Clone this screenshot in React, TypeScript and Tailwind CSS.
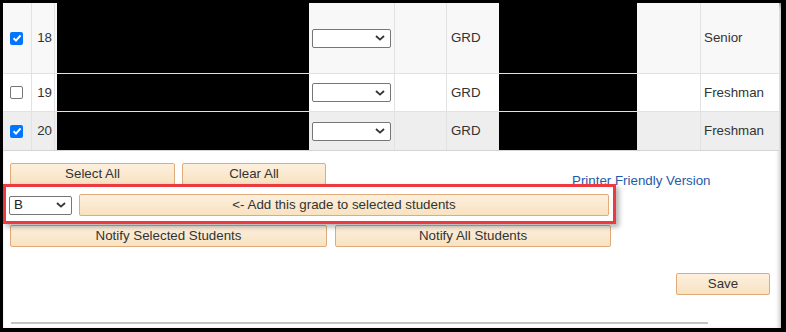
import React from "react";

const font = { fontFamily: '"Liberation Sans", Arial, sans-serif' };

function Check({ on }: { on: boolean }) {
  return on ? (
    <span className="inline-flex w-[13px] h-[13px] rounded-[2px] bg-[#0075ff] items-center justify-center">
      <svg width="10" height="10" viewBox="0 0 10 10">
        <path d="M1.6 5.2 L4 7.6 L8.6 2.4" fill="none" stroke="#fff" strokeWidth="2" />
      </svg>
    </span>
  ) : (
    <span className="inline-block w-[13px] h-[13px] rounded-[2px] border border-[#767676] bg-white" />
  );
}

function Chevron() {
  return (
    <svg width="10" height="6" viewBox="0 0 10 6">
      <path d="M1 1 L5 4.6 L9 1" fill="none" stroke="#333" strokeWidth="1.8" />
    </svg>
  );
}

function FakeSelect({ value, w }: { value?: string; w: string }) {
  return (
    <div className={`${w} h-[19px] border border-[#767676] rounded-[2px] bg-white flex items-center justify-between pl-[4px] pr-[5px] text-[#222]`}>
      <span>{value ?? ""}</span>
      <Chevron />
    </div>
  );
}

function Btn({ children, w }: { children: React.ReactNode; w: string }) {
  return (
    <button className={`${w} h-[22px] border border-[#e0ab78] rounded-[2px] bg-gradient-to-b from-[#fdf0de] to-[#f8e2c0] text-[#333] text-center leading-[20px]`}>
      {children}
    </button>
  );
}

const rows = [
  { n: 18, on: true, h: "h-[71px]", bg: "bg-[#f8f8f8]", cls: "Senior" },
  { n: 19, on: false, h: "h-[38px]", bg: "bg-white", cls: "Freshman" },
  { n: 20, on: true, h: "h-[38px]", bg: "bg-[#eeeeee]", cls: "Freshman" },
];

export default function App() {
  return (
    <div className="w-[786px] h-[332px] bg-black pt-[3px] pl-[3px] pr-[5px] pb-[4px] text-[13.33px]" style={font}>
      <div className="relative h-full bg-white overflow-hidden shadow-[inset_0_5px_4px_-2px_rgba(0,0,0,0.28),inset_-4px_0_4px_-2px_rgba(0,0,0,0.2)]">
        {/* grade table */}
        <div className="w-[776px] border-b border-[#d4d4d4] text-[#333]">
          {rows.map(r => (
            <div key={r.n} className={`flex ${r.h} ${r.bg} border-b border-[#e2e2e2] last:border-b-0`}>
              <div className="w-[29px] flex items-center justify-center pr-[1px] border-r border-[#e2e2e2]">
                <Check on={r.on} />
              </div>
              <div className="w-[23px] flex items-center justify-end pr-[2px] border-r border-[#e2e2e2]">{r.n}</div>
              <div className="w-[254px] pl-[2px]">
                <div className="h-full bg-black" />
              </div>
              <div className="w-[86px] flex items-center pl-[3px] border-r border-[#e2e2e2]">
                <FakeSelect w="w-[79px]" />
              </div>
              <div className="w-[52px] border-r border-[#e2e2e2]" />
              <div className="w-[253px] flex items-center pl-[4px]">
                <span className="w-[48px]">GRD</span>
                <div className="w-[138px] h-full bg-black" />
              </div>
              <div className="w-[1px] bg-[#e2e2e2]" />
              <div className="flex-1 flex items-center pl-[3px]">{r.cls}</div>
            </div>
          ))}
        </div>

        {/* actions */}
        <div className="flex pl-[7px] pt-[12px]">
          <div className="flex flex-col w-[602px]">
            <div className="flex gap-[7px]">
              <Btn w="w-[165px]">Select All</Btn>
              <Btn w="w-[144px]">Clear All</Btn>
            </div>
            <div className="flex items-center gap-[7px] mt-[9px] -ml-[1px]">
              <FakeSelect value="B" w="w-[63px]" />
              <Btn w="w-[530px]">&lt;- Add this grade to selected students</Btn>
            </div>
            <div className="flex gap-[8px] mt-[9px]">
              <Btn w="w-[317px]">Notify Selected Students</Btn>
              <Btn w="w-[276px]">Notify All Students</Btn>
            </div>
          </div>
          <div className="flex flex-col flex-1">
            <a className="ml-[-40px] mt-[10px] text-[#1e5aa8] leading-[16px]">Printer Friendly Version</a>
            <div className="flex justify-end pr-[11px] mt-[84px]">
              <Btn w="w-[94px]">Save</Btn>
            </div>
          </div>
        </div>
        <div className="ml-[8px] mt-[27px] w-[697px] h-[2px] bg-[#c4c4c4]" />

        {/* annotation box */}
        <div className="absolute left-0 top-[181px] w-[613px] h-[40px] border-[3px] border-[#ec3a40] shadow-[3px_3px_5px_rgba(0,0,0,0.3)]" />
      </div>
    </div>
  );
}
